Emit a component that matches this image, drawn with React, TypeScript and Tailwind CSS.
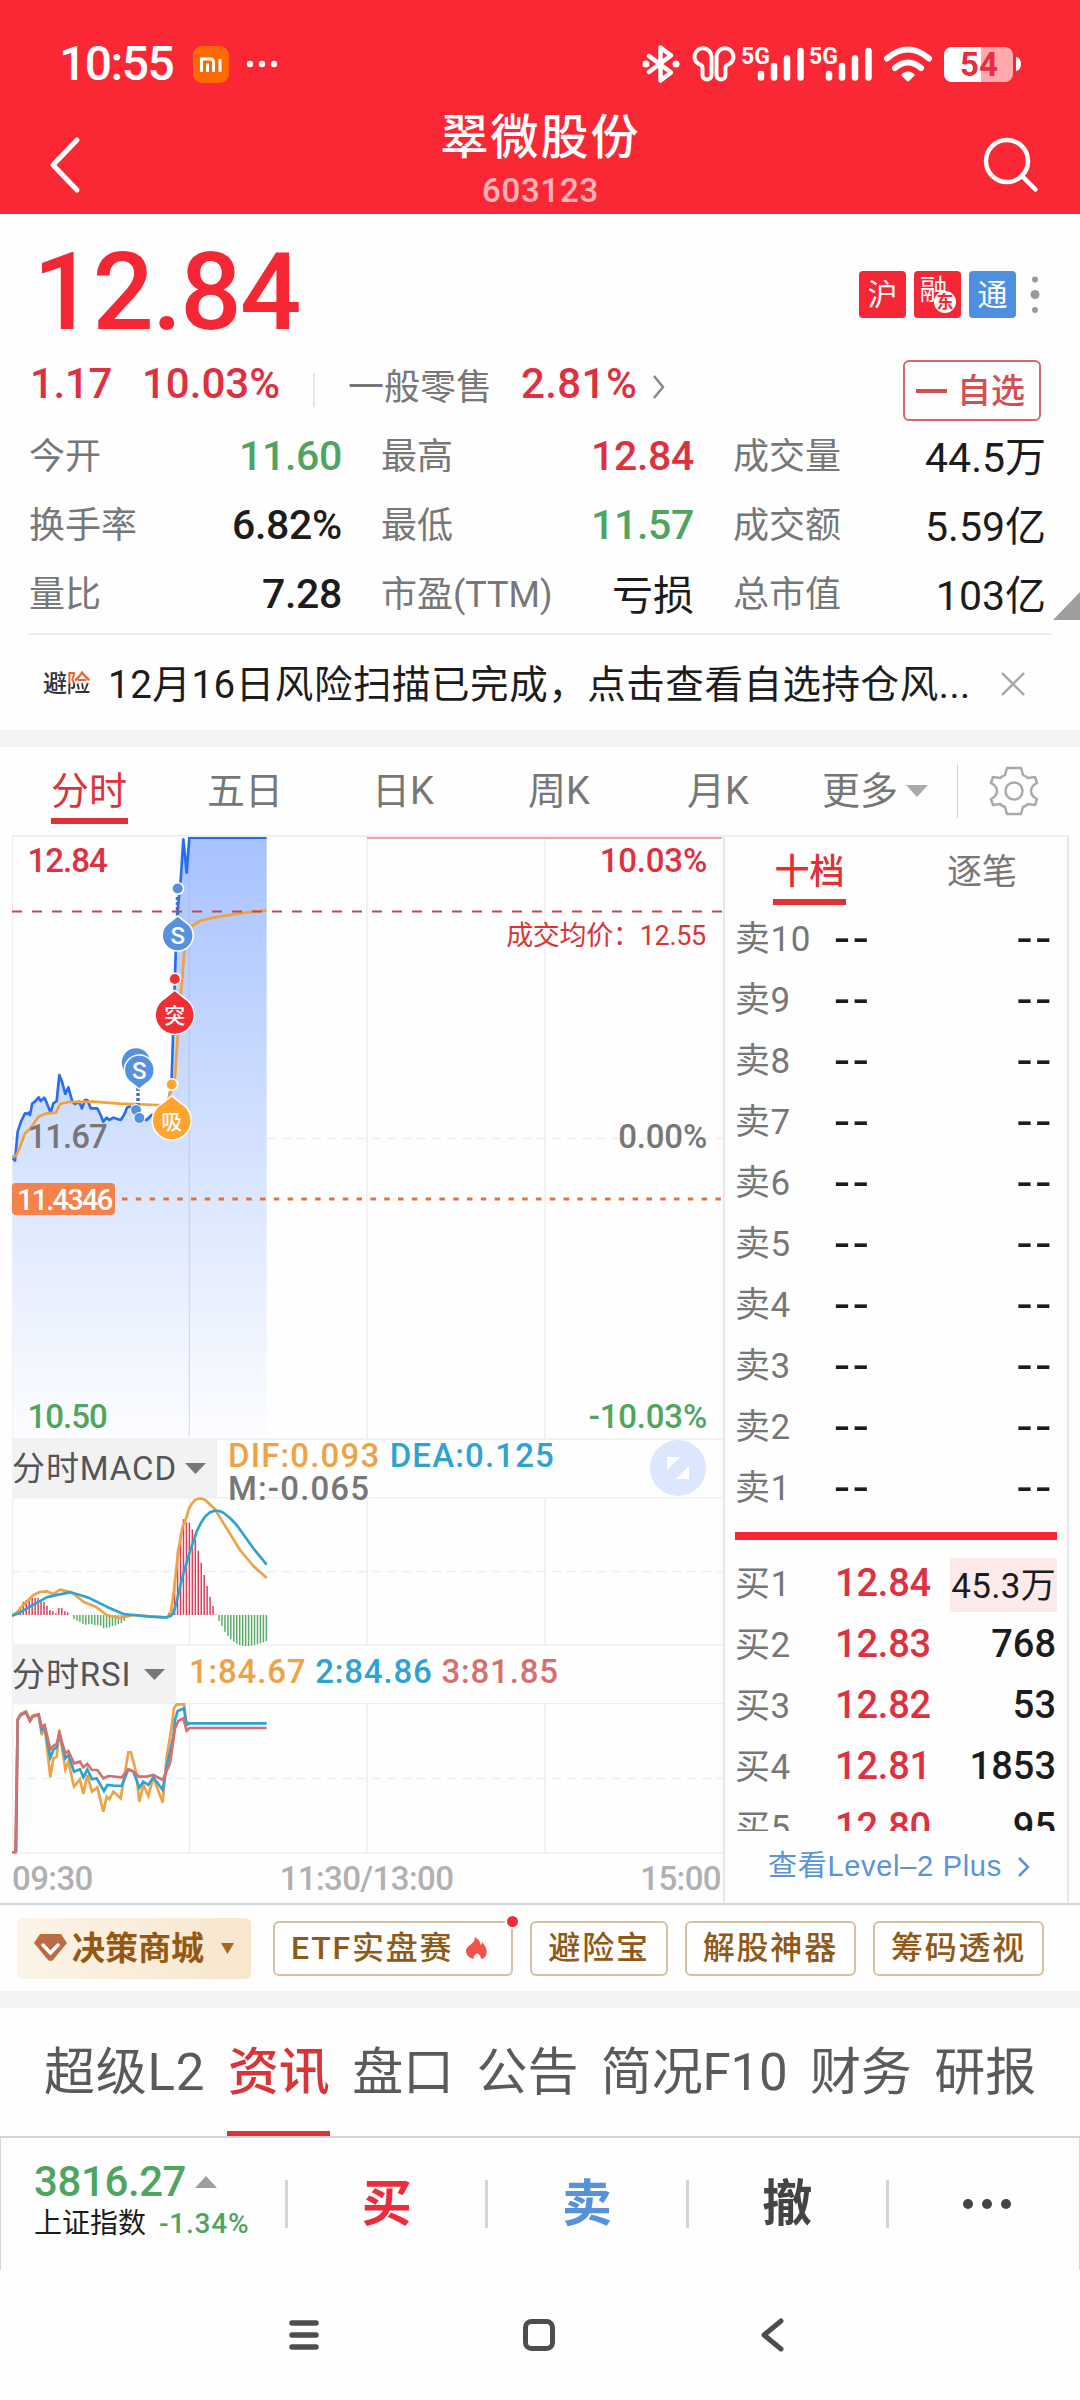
import { ReactNode } from "react"

const stats = [
    [["今开", "11.60", "text-[#4fa55f]"], ["最高", "12.84", "text-[#e03040]"], ["成交量", "44.5万", "text-[#1c1c1c]"]],
    [["换手率", "6.82%", "text-[#1c1c1c]"], ["最低", "11.57", "text-[#4fa55f]"], ["成交额", "5.59亿", "text-[#1c1c1c]"]],
    [["量比", "7.28", "text-[#1c1c1c]"], ["市盈(TTM)", "亏损", "text-[#1c1c1c]"], ["总市值", "103亿", "text-[#1c1c1c]"]],
]

const sells = [10, 9, 8, 7, 6, 5, 4, 3, 2, 1]

const buys = [
    ["买1", "12.84", "45.3万"],
    ["买2", "12.83", "768"],
    ["买3", "12.82", "53"],
    ["买4", "12.81", "1853"],
    ["买5", "12.80", "95"],
]

// [first bar x, tops...], zero line at 375
const redBars = [
    { x: 61, ys: [350, 335, 330, 326, 324, 324, 324, 330, 336, 347, 360, 364, 370, 354, 354, 364, 367] },
    { x: 506, ys: [368, 350, 275, 182, 130, 88, 97, 98, 118, 150, 182, 218, 255, 288, 320, 348, 373] },
]
const greenBars = [
    { x: 222, ys: [388, 392, 396, 401, 404, 403, 403, 406, 406, 407, 415, 413, 412, 408, 406, 403, 400, 392, 382] },
    { x: 657, ys: [393, 408, 425, 438, 448, 455, 461, 465, 467, 468, 468, 467, 465, 463, 460, 457, 453] },
]

const price =
    "38,1015 45,1022 53,935 63,905 75,880 82,882 86,878 90,885 97,850 105,845 116,832 122,843 133,833 140,848 152,878 160,850 170,843 178,765 186,785 196,822 205,802 217,845 225,852 237,845 246,865 255,840 262,840 272,865 292,865 302,885 310,905 320,893 328,900 340,893 362,900 372,885 382,862 390,860 400,870 418,893 440,900 455,885 500,870 510,820 515,775 519,650 524,500 527,400 533,270 542,180 550,58 560,158 568,53 800,53"
const avg =
    "36,1010 48,1008 60,980 75,940 92,925 115,890 140,880 168,878 180,852 205,846 280,845 360,851 470,855 500,855 525,770 533,650 543,520 553,395 575,318 600,303 640,293 700,283 760,275 800,272"

function StatusIcons() {
    return (
        <svg width="390" height="44" viewBox="640 42 390 44" fill="none" stroke="#fff" strokeLinecap="round" strokeLinejoin="round">
            <path d="M649 56l22 16.500-10.500 8v-33l10.500 8-22 16.500" strokeWidth="4.500" />
            <circle cx="646" cy="64" r="3.500" fill="#fff" stroke="none" />
            <circle cx="676" cy="64" r="3.500" fill="#fff" stroke="none" />
            <path d="M711.500 59v-2a8.500 8.500 0 1 0-10.500 8c1 .500 1.500 1.500 1.500 3V75c0 6 9 6 9 0z" strokeWidth="4" />
            <path d="M716.500 59v-2a8.500 8.500 0 1 1 10.500 8c-1 .500-1.500 1.500-1.500 3V75c0 6-9 6-9 0z" strokeWidth="4" />
            <text x="741" y="63.500" fill="#fff" stroke="none" className="font-[Roboto] text-[23px] font-bold">5G</text>
            <path d="M761 74v3.500M774 66v11.500M787 58.500v19M800.500 51v26.500" strokeWidth="6.500" />
            <text x="809" y="63.500" fill="#fff" stroke="none" className="font-[Roboto] text-[23px] font-bold">5G</text>
            <path d="M829 74v3.500M842 66v11.500M855 58.500v19M868.500 51v26.500" strokeWidth="6.500" />
            <path d="M887 58.500Q908 40.500 929 58.500M895 68Q908 57 921 68" strokeWidth="6" />
            <path d="M903 75Q908 71 913 75L908 80z" fill="#fff" strokeWidth="3" />
            <rect x="944" y="47" width="69" height="35" rx="8" fill="#ffa8ae" stroke="none" />
            <path d="M952 47h29v35h-29a8 8 0 0 1-8-8V55a8 8 0 0 1 8-8z" fill="#fff" stroke="none" />
            <path d="M1016 57q5 1 5 7t-5 7z" fill="#fff" stroke="none" />
            <text x="979" y="76" textAnchor="middle" fill="#ea2c3d" stroke="none" className="font-[Roboto] text-[33px] font-bold">54</text>
        </svg>
    )
}

function Header() {
    return (
        <header className="h-[214px] bg-[#fa2735] text-white">
            <div className="flex h-[106px] items-center justify-between pt-[22px] pr-[50px] pl-[59px]">
                <div className="flex items-center">
                    <span className="w-[134px] text-[48px] leading-none font-medium tracking-[-1.500px]">10:55</span>
                    <svg width="37" height="37" viewBox="0 0 37 37" fill="none">
                        <rect width="36" height="37" rx="9" fill="#ff6a00" />
                        <path d="M8.500 26V13H17q3.500 0 3.500 3.500V26M14.500 17.500V26M27 13v13" stroke="#fff" strokeWidth="3" />
                    </svg>
                    <svg className="ml-4" width="34" height="8" fill="#fff">
                        <circle cx="4" cy="4" r="3.200" />
                        <circle cx="16" cy="4" r="3.200" />
                        <circle cx="28" cy="4" r="3.200" />
                    </svg>
                </div>
                <StatusIcons />
            </div>
            <div className="flex h-[108px] items-start justify-between pr-[40px] pl-[48px]">
                <svg className="mt-[29px]" width="36" height="60" fill="none" stroke="#fff" strokeWidth="5" strokeLinecap="round" strokeLinejoin="round">
                    <path d="M29 5L5 30l24 25" />
                </svg>
                <div className="flex flex-col items-center pl-[14px]">
                    <h1 className="mt-[6px] text-[48px] leading-[52px] font-medium tracking-[2px]">翠微股份</h1>
                    <span className="mt-[10px] text-[33px] leading-none font-medium tracking-[0.700px] text-white/65">603123</span>
                </div>
                <svg className="mt-[29px]" width="57" height="58" fill="none" stroke="#fff" strokeWidth="4.500" strokeLinecap="round">
                    <circle cx="24" cy="26" r="21" />
                    <path d="M39 41l13.500 13.500" />
                </svg>
            </div>
        </header>
    )
}

function Badge({ color, children }: { color: string; children: ReactNode }) {
    return <span className={`relative flex size-[47px] items-center justify-center rounded-[4px] text-[30px] leading-none text-white ${color}`}>{children}</span>
}

function Quote() {
    return (
        <section>
            <div className="flex h-[138px] items-start justify-between pr-[39px] pl-[33px]">
                <span className="mt-[24px] text-[108px] leading-none font-medium tracking-[-1.800px] text-[#f52735]">12.84</span>
                <div className="mt-[57px] flex gap-2">
                    <Badge color="bg-[#f52735]">沪</Badge>
                    <Badge color="bg-[#f52735]">
                        <span className="-mt-2 -ml-2 text-[28px]">融</span>
                        <span className="absolute right-[5px] bottom-[5px] flex size-[22px] items-center justify-center rounded-full bg-white text-[17px] font-bold text-[#f52735]">东</span>
                    </Badge>
                    <Badge color="bg-[#4f8fe0]">通</Badge>
                    <svg className="mt-1 ml-[5px]" width="12" height="40" fill="#999">
                        <circle cx="6" cy="4.500" r="3" />
                        <circle cx="6" cy="19.500" r="4.500" />
                        <circle cx="6" cy="35" r="3" />
                    </svg>
                </div>
            </div>
            <div className="flex h-[76px] items-center pr-[39px] pl-[30px] text-[42px] leading-none font-medium text-[#e03040]">
                <span className="mt-[-12px] w-[112px] tracking-[-0.300px]">1.17</span>
                <span className="mt-[-12px] w-[171px]">10.03%</span>
                <span className="mr-[33px] h-[34px] w-[2px] bg-gray-200" />
                <span className="mt-[-5px] w-[173px] text-[36px] font-normal text-[#777]">一般零售</span>
                <span className="mt-[-12px] tracking-[0.400px]">2.81%</span>
                <svg className="mt-[-6px] ml-[14px]" width="16" height="26" fill="none" stroke="#888" strokeWidth="2.500">
                    <path d="M3 2l9 11-9 11" />
                </svg>
                <button className="ml-auto flex h-[61px] w-[138px] items-center gap-[10px] rounded-[6px] border-2 border-[#d9666a] pt-px pl-[11px] text-[34px] font-medium text-[#d25053]">
                    <span className="h-[4px] w-[31px] bg-[#d25053]" />
                    自选
                </button>
            </div>
            <div className="relative mx-7 -mt-[6px] flex flex-col border-b-2 border-gray-200/70 pb-[4px]">
                {stats.map((row) => (
                    <div key={row[0][0]} className="flex h-[69px] items-center leading-none">
                        {row.map(([label, value, color]) => (
                            <div key={label} className="mr-[38px] flex w-[314px] items-center justify-between last:mr-0">
                                <span className="pl-px text-[36px] text-[#777]">{label}</span>
                                <span className={`text-[41px] ${color} ${/[0-9.%]$/.test(value) ? "font-medium tracking-[-0.300px]" : "pt-[3px]"}`}>{value}</span>
                            </div>
                        ))}
                    </div>
                ))}
                <svg className="absolute -right-7 bottom-[13px]" width="27" height="28" fill="#9e9e9e">
                    <path d="M0 28L27 0v28z" />
                </svg>
            </div>
            <div className="flex h-[95px] items-center pt-[6px] pr-[54px] pl-[43px] leading-none">
                <span className="mr-[18px] -mt-[3px] text-[24px] font-medium tracking-[-0.500px] text-[#333]">
                    避<span className="bg-linear-to-b from-[#f0602f] from-45% to-[#333] to-50% bg-clip-text text-transparent">险</span>
                </span>
                <span className="flex-1 text-[38.500px] tracking-[0.550px] whitespace-nowrap text-[#1c1c1c]">12月16日风险扫描已完成，点击查看自选持仓风...</span>
                <svg className="-mt-1" width="26" height="26" fill="none" stroke="#aaa" strokeWidth="2.500">
                    <path d="M2 2l22 22M24 2L2 24" />
                </svg>
            </div>
        </section>
    )
}

function PeriodTabs() {
    return (
        <nav className="flex h-[88px] items-center pl-[51px] text-[38px] leading-none text-[#777]">
            <span className="relative mr-[79px] w-[77px] text-[#d93438]">
                分时
                <span className="absolute -bottom-[14px] left-0 h-[6px] w-full bg-[#e03236]" />
            </span>
            <span className="w-[165px]">五日</span>
            <span className="w-[156px]">日K</span>
            <span className="w-[159px]">周K</span>
            <span className="w-[135px]">月K</span>
            <span>更多</span>
            <svg className="ml-[8px]" width="22" height="12" fill="#aaa">
                <path d="M0 0h22L11 12z" />
            </svg>
            <span className="ml-[29px] h-[54px] w-px bg-gray-300" />
            <svg className="ml-[31px]" width="50" height="52" viewBox="-25 -26 50 52" fill="none" stroke="#aaa" strokeWidth="2.500" strokeLinejoin="round">
                <path d="M-7-23H7L9-16Q12-14.500 14-13L21-14 23-8Q17-5 17 0T23 8L21 14 14 13Q12 15 9 16L7 23H-7L-9 16Q-12 15-14 13L-21 14-23 8Q-17 5-17 0T-23-8L-21-14-14-13Q-12-14.500-9-16Z" />
                <circle r="8.500" />
            </svg>
        </nav>
    )
}

function Drop({ x, y, r, color, label, down }: { x: number; y: number; r: number; color: string; label?: string; down?: boolean }) {
    return (
        <g transform={`translate(${x} ${y})`}>
            <path
                transform={down ? "rotate(180)" : undefined}
                d={`M0 ${-r * 1.27}L${r * 0.5} ${-r * 0.87}A${r} ${r} 0 1 1 ${-r * 0.5} ${-r * 0.87}Z`}
                fill={color}
                stroke="#fff"
                strokeWidth="1.500"
            />
            {label && (
                <text textAnchor="middle" y={label === "S" ? 8.5 : 8} fill="#fff" className={label === "S" ? "text-[24px] font-medium" : "text-[21px] font-medium"}>{label}</text>
            )}
        </g>
    )
}

function PriceChart() {
    return (
        <svg className="block" width="711" height="603" viewBox="12 17 711 603" fill="none">
            <defs>
                <linearGradient id="area" x1="0" y1="0" x2="0" y2="1">
                    <stop offset="0" stopColor="#a8c2ff" />
                    <stop offset="0.600" stopColor="#dce7fe" />
                    <stop offset="1" stopColor="#fcfdff" />
                </linearGradient>
            </defs>
            <g stroke="#eee" strokeWidth="1.500">
                <path d="M12.500 17v602M367 17v602M545 17v602M12 619h711" />
                <path d="M12 318.500h711" strokeDasharray="9 6" />
            </g>
            <path d="M367 18h355" stroke="#eda3a8" strokeWidth="2" />
            <g transform="scale(0.33333)" strokeLinejoin="round">
                <polygon points={`38,1850 ${price} 800,1850`} fill="url(#area)" />
                <path d="M568 53V1850" stroke="#9ab" strokeOpacity="0.300" strokeWidth="4" />
                <polyline points={price} stroke="#2a6df0" strokeWidth="8" />
                <polyline points={avg} stroke="#f2a23c" strokeWidth="8" />
            </g>
            <path d="M12 91.500h710" stroke="#c04a50" strokeWidth="2" strokeDasharray="10 10" />
            <path d="M122 379h601" stroke="#e5703c" strokeWidth="3" strokeDasharray="5.500 8.300" />
            <path d="M177.500 72v24M138 268v22" stroke="#3f6fc8" strokeWidth="3.500" strokeDasharray="3 2" />

            <circle cx="177.700" cy="68.500" r="5.800" fill="#5591dc" stroke="#fff" strokeWidth="1.500" />
            <Drop x={177.700} y={115.500} r={15.500} color="#5591dc" label="S" />
            <circle cx="174.800" cy="159" r="5.800" fill="#ee2f35" stroke="#fff" strokeWidth="1.500" />
            <Drop x={174.700} y={195} r={19.500} color="#ee2f35" label="突" />
            <circle cx="171.700" cy="264.500" r="5.800" fill="#ffa52e" stroke="#fff" strokeWidth="1.500" />
            <Drop x={171.700} y={300.500} r={19.500} color="#ffa52e" label="吸" />
            <Drop x={136} y={242.500} r={15} color="#5591dc" down />
            <Drop x={139.300} y={250} r={15} color="#5591dc" label="S" down />
            <circle cx="136" cy="290" r="5.500" fill="#5591dc" stroke="#fff" strokeWidth="1" />
            <circle cx="139.300" cy="298" r="5.500" fill="#5591dc" stroke="#fff" strokeWidth="1" />

            <g className="text-[33px] font-medium tracking-[-1px]">
                <text x="27.500" y="52" fill="#e03040">12.84</text>
                <text x="27.500" y="328" fill="#777">11.67</text>
                <text x="27.500" y="607.500" fill="#4fa55f">10.50</text>
                <g textAnchor="end" className="tracking-[-0.200px]">
                    <text x="707" y="52" fill="#e03040">10.03%</text>
                    <text x="707" y="328" fill="#777">0.00%</text>
                    <text x="707" y="607.500" fill="#4fa55f">-10.03%</text>
                    <text x="706" y="125" fill="#d93438" className="text-[27px] font-normal tracking-[-0.300px]">成交均价：12.55</text>
                </g>
            </g>
            <rect x="12" y="363" width="103" height="32" rx="4" fill="#f5824a" />
            <text x="17" y="389.500" fill="#fff" className="text-[29px] font-medium tracking-[-1.800px]">11.4346</text>
        </svg>
    )
}

function Bars({ groups, color }: { groups: { x: number; ys: number[] }[]; color: string }) {
    return (
        <path
            d={groups.flatMap((g) => g.ys.map((y, i) => `M${g.x + i * 8.88} 375V${y}`)).join("")}
            stroke={color}
            strokeWidth="4.500"
        />
    )
}

function Indicator({ name, width, values, children }: { name: string; width: string; values: ReactNode; children?: ReactNode }) {
    return (
        <div className="relative flex h-[57px] items-start">
            <span className={`flex h-[57px] items-center justify-between bg-[#f2f2f2] pr-[11px] text-[33px] leading-none tracking-[0.900px] text-[#555] ${width}`}>
                {name}
                <svg width="21" height="11" fill="#777">
                    <path d="M0 0h21L10.500 11z" />
                </svg>
            </span>
            {values}
            {children}
        </div>
    )
}

function MacdPlot() {
    return (
        <svg className="block" width="711" height="149" viewBox="12 7 711 149" fill="none">
            <g stroke="#eee" strokeWidth="1.500">
                <path d="M12.500 7v149M189.500 7v149M367 7v149M545 7v149M12 7.500h711M12 155h711" />
                <path d="M12 81.500h711" strokeDasharray="9 6" />
            </g>
            <g transform="scale(0.33333)" strokeLinejoin="round">
                <Bars groups={redBars} color="#d9405a" />
                <Bars groups={greenBars} color="#5aad69" />
                <polyline
                    points="36,377 50,368 70,345 100,315 120,306 140,304 160,312 180,299 215,307 250,335 290,352 320,375 360,384 400,375 500,383 512,370 522,300 535,180 548,110 560,80 567,55 575,42 585,30 595,26 605,26 615,29 645,58 680,115 720,180 760,228 800,264"
                    stroke="#eda345"
                    strokeWidth="8"
                />
                <polyline
                    points="36,377 55,370 90,350 140,322 175,314 210,307 240,315 270,325 320,350 370,372 400,375 450,380 500,382 512,378 520,370 530,335 545,270 565,200 590,125 602,100 615,80 630,67 645,62 658,63 670,68 690,84 710,105 760,175 800,224"
                    stroke="#2ea3cf"
                    strokeWidth="8"
                />
            </g>
        </svg>
    )
}

function RsiPlot() {
    return (
        <svg className="block" width="711" height="151" viewBox="12 213 711 151" fill="none">
            <g stroke="#eee" strokeWidth="1.500">
                <path d="M12.500 213v150M189.500 213v150M367 213v150M545 213v150M12 213.500h711M12 363.300h711" />
                <path d="M12 288.500h711" strokeDasharray="9 6" />
            </g>
            <g transform="scale(0.33333)" strokeWidth="8">
                <polyline
                    points="48,1087 53,688 62,672 78,664 90,690 98,676 116,672 125,735 134,710 151,862 160,805 170,800 178,720 196,838 205,815 222,890 240,868 250,912 262,855 276,905 292,892 310,965 320,920 328,928 340,905 362,925 372,865 385,787 393,787 408,845 418,935 430,885 445,918 460,862 488,938 500,800 512,730 522,655 530,643 552,643 558,695 568,700"
                    stroke="#eda345"
                />
                <polyline
                    points="48,1087 53,689 62,674 78,667 90,692 98,679 116,674 125,720 134,712 151,803 160,780 170,772 178,730 196,805 205,795 222,845 240,838 250,862 262,838 276,868 290,865 312,903 322,885 340,887 365,888 385,838 400,845 418,893 430,875 445,885 460,862 488,900 500,830 520,740 525,690 533,663 552,655 560,705 568,700 800,700"
                    stroke="#2ea3cf"
                />
                <polyline
                    points="36,1087 46,1087 53,690 62,676 78,668 90,693 98,680 116,675 125,710 134,705 151,778 160,768 170,762 178,730 196,790 205,783 222,820 240,815 250,832 262,822 276,840 292,840 310,865 325,858 365,862 385,838 400,845 418,860 440,860 460,855 488,870 510,820 525,715 535,693 550,685 560,722 568,714 800,714"
                    stroke="#d66f70"
                />
            </g>
        </svg>
    )
}

function Charts() {
    return (
        <div className="w-[711px]">
            <PriceChart />
            <Indicator
                name="分时MACD"
                width="w-[205px]"
                values={
                    <div className="-mt-px ml-[11px] text-[33px] leading-[33px] font-medium tracking-[1.150px] text-[#777]">
                        <div className="whitespace-nowrap">
                            <span className="text-[#eda345]">DIF:0.093</span> <span className="text-[#2ea3cf]">DEA:0.125</span>
                        </div>
                        <div>M:-0.065</div>
                    </div>
                }
            >
                <svg className="absolute top-0 right-[17px]" width="56" height="56">
                    <circle cx="28" cy="28" r="28" fill="#dce6fc" />
                    <path d="M17 17h13L17 30zM39 39H26l13-13z" fill="#fff" />
                </svg>
            </Indicator>
            <MacdPlot />
            <Indicator
                name="分时RSI"
                width="w-[164px]"
                values={
                    <div className="mt-[9px] ml-[13px] flex gap-[9px] text-[33px] leading-none font-medium tracking-[0.800px]">
                        <span className="text-[#eda345]">1:84.67</span>
                        <span className="text-[#2ea3cf]">2:84.86</span>
                        <span className="text-[#d66f70]">3:81.85</span>
                    </div>
                }
            />
            <RsiPlot />
            <div className="flex h-[48px] items-center justify-between pr-[2px] text-[33px] leading-none font-medium tracking-[-0.600px] text-[#b0b0b0]">
                <span>09:30</span>
                <span>11:30/13:00</span>
                <span>15:00</span>
            </div>
        </div>
    )
}

function OrderBook() {
    return (
        <aside className="flex w-[346px] flex-col border-x-2 border-gray-200 pr-[10px] pl-[10px] leading-none">
            <div className="flex h-[68px] items-end text-[35px] text-[#777]">
                <span className="relative ml-[38px] w-[73px] pb-[15px] text-center font-medium text-[#e03236]">
                    十档
                    <span className="absolute bottom-0 left-0 h-[6px] w-full bg-[#e03236]" />
                </span>
                <span className="ml-[101px] pb-[15px]">逐笔</span>
            </div>
            <div className="pt-[4px]">
                {sells.map((n) => (
                    <div key={n} className="flex h-[61px] items-center pr-1 text-[35px] text-[#777]">
                        <span className="w-[99px] tracking-[0.500px]">卖{n}</span>
                        <span className="-mt-[2px] origin-left scale-x-125 text-[38px] font-medium tracking-[2px] text-[#1c1c1c]">--</span>
                        <span className="-mt-[2px] -mr-[1px] ml-auto origin-right scale-x-125 text-[38px] font-medium tracking-[2px] text-[#1c1c1c]">--</span>
                    </div>
                ))}
            </div>
            <div className="mt-[13px] mb-[14px] h-[8px] bg-[#f52735]" />
            <div className="h-[277px] overflow-hidden">
                {buys.map(([label, p, vol], i) => (
                    <div key={label} className="flex h-[61px] items-center text-[35px] text-[#777]">
                        <span className="w-[100px] tracking-[0.500px]">{label}</span>
                        <span className="-mt-[3px] text-[38px] font-medium tracking-[-0.200px] text-[#e03040]">{p}</span>
                        {i === 0 ? (
                            <span className="ml-auto flex h-[54px] w-[107px] items-center justify-end bg-[#fceaea] pt-1 pr-[1px] text-[35px] tracking-[0.300px] text-[#1c1c1c]">{vol}</span>
                        ) : (
                            <span className="-mt-[3px] ml-auto pr-[1px] text-[38px] font-medium text-[#1c1c1c]">{vol}</span>
                        )}
                    </div>
                ))}
            </div>
            <div className="mt-[21px] flex items-center pl-[33px] font-['Liberation_Sans','Noto_Sans_CJK_SC',sans-serif] text-[29px] tracking-[0.700px] whitespace-nowrap text-[#5a93d8]">
                查看Level–2 Plus
                <svg className="ml-[15px]" width="14" height="22" fill="none" stroke="#5a93d8" strokeWidth="2.500">
                    <path d="M2 2l9 9-9 9" />
                </svg>
            </div>
        </aside>
    )
}

function Chip({ children }: { children: ReactNode }) {
    return (
        <span className="relative flex h-[55px] items-center rounded-[6px] border-2 border-[#d8bf9f] px-[16px] text-[32px] leading-none font-medium tracking-[1.800px] whitespace-nowrap text-[#8f5a17]">
            {children}
        </span>
    )
}

function Tools() {
    return (
        <div className="flex h-[88px] items-center border-t-2 border-gray-300 pl-[17px]">
            <span className="mr-[22px] flex h-[61px] w-[234px] items-center rounded-[6px] bg-linear-to-r from-[#fcf4e8] to-[#f8e6cd] pl-[17px] text-[33px] leading-none font-bold text-[#945812]">
                <svg className="mr-[5px]" width="33" height="28" fill="none">
                    <path d="M6 0h21l6 9-14 17q-2.500 2-5 0L0 9z" fill="#bb6c45" />
                    <path d="M9 11l7.500 8 7.500-8" stroke="#fff" strokeWidth="3.500" strokeLinecap="round" />
                </svg>
                决策商城
                <svg className="ml-[16px]" width="15" height="11" fill="#a9651f">
                    <path d="M1 0h13L7.500 11z" />
                </svg>
            </span>
            <div className="flex gap-[17px]">
                <Chip>
                    ETF实盘赛
                    <svg className="mr-[8px] ml-[13px]" width="21" height="22" fill="#f2524a">
                        <path d="M9 0c6 4 5 7 6 8 1-1 1-2 1-3 5 5 6 11 3 15-1 1-3 2-4 2 0-3-2-5-4-6-3 2-4 4-3 6C3 21 0 18 0 14c0-6 9-6 9-14z" />
                    </svg>
                    <span className="absolute -top-[9px] -right-[9px] size-[15px] rounded-full border-2 border-white bg-[#ee2f35]" />
                </Chip>
                <Chip>避险宝</Chip>
                <Chip>解股神器</Chip>
                <Chip>筹码透视</Chip>
            </div>
        </div>
    )
}

function InfoTabs() {
    return (
        <nav className="flex h-[128px] justify-between px-[44px] pt-[39px] text-[51px] leading-none tracking-[-0.200px] whitespace-nowrap text-[#5a5a5a]">
            <span className="tracking-[0.800px]">超级L2</span>
            <span className="relative font-medium text-[#d93438]">
                资讯
                <span className="absolute top-[84px] -left-[1px] h-[5px] w-[103px] bg-[#d93438]" />
            </span>
            <span>盘口</span>
            <span>公告</span>
            <span>简况F10</span>
            <span>财务</span>
            <span>研报</span>
        </nav>
    )
}

function TradeBar() {
    const cell = "flex h-[48px] flex-1 items-center justify-center border-l-[3px] border-gray-300 text-[50px] leading-none font-bold"
    return (
        <div className="flex h-[134px] items-center border-x border-t-2 border-gray-300">
            <div className="-mt-[10px] w-[284px] shrink-0 pl-[33px] leading-none font-medium text-[#4fa55f]">
                <div className="flex items-center text-[42px] tracking-[-0.400px]">
                    3816.27
                    <svg className="ml-[9px]" width="22" height="12" fill="#9e9e9e">
                        <path d="M0 12h22L11 0z" />
                    </svg>
                </div>
                <div className="mt-[7px] flex items-center text-[28px] tracking-[0.800px]">
                    <span className="mr-[13px] font-normal tracking-normal text-[#1c1c1c]">上证指数</span>
                    -1.34%
                </div>
            </div>
            <div className="-mr-[7px] flex flex-1 items-center">
                <span className={`${cell} text-[#ea2c3d]`}>买</span>
                <span className={`${cell} text-[#5591dc]`}>卖</span>
                <span className={`${cell} text-[#444]`}>撤</span>
                <span className={cell}>
                    <svg width="50" height="12" fill="#444">
                        <circle cx="6" cy="6" r="5" />
                        <circle cx="25" cy="6" r="5" />
                        <circle cx="44" cy="6" r="5" />
                    </svg>
                </span>
            </div>
        </div>
    )
}

function NavBar() {
    return (
        <div className="flex h-[130px] items-center pl-[288px] text-[#4d4d4d]">
            <svg width="32" height="34" stroke="currentColor" strokeWidth="5.500" strokeLinecap="round">
                <path d="M4 5h24M4 17h24M4 29h24" />
            </svg>
            <svg className="ml-[202px]" width="34" height="34" fill="none" stroke="currentColor" strokeWidth="5">
                <rect x="3.500" y="3.500" width="27" height="27" rx="6" />
            </svg>
            <svg className="ml-[202px]" width="28" height="36" fill="none" stroke="currentColor" strokeWidth="5" strokeLinecap="round" strokeLinejoin="round">
                <path d="M23 4L6 18l17 14" />
            </svg>
        </div>
    )
}

export default function App() {
    return (
        <div className="h-[2400px] w-[1080px] overflow-hidden bg-[#fefefe] font-[Roboto,'Noto_Sans_CJK_SC',sans-serif]">
            <Header />
            <Quote />
            <div className="h-[17px] bg-[#f4f4f4]" />
            <PeriodTabs />
            <div className="mr-[11px] ml-3 flex h-[1068px] border-t-2 border-gray-200/70">
                <Charts />
                <OrderBook />
            </div>
            <Tools />
            <div className="h-[17px] bg-[#f4f4f4]" />
            <InfoTabs />
            <TradeBar />
            <NavBar />
        </div>
    )
}
